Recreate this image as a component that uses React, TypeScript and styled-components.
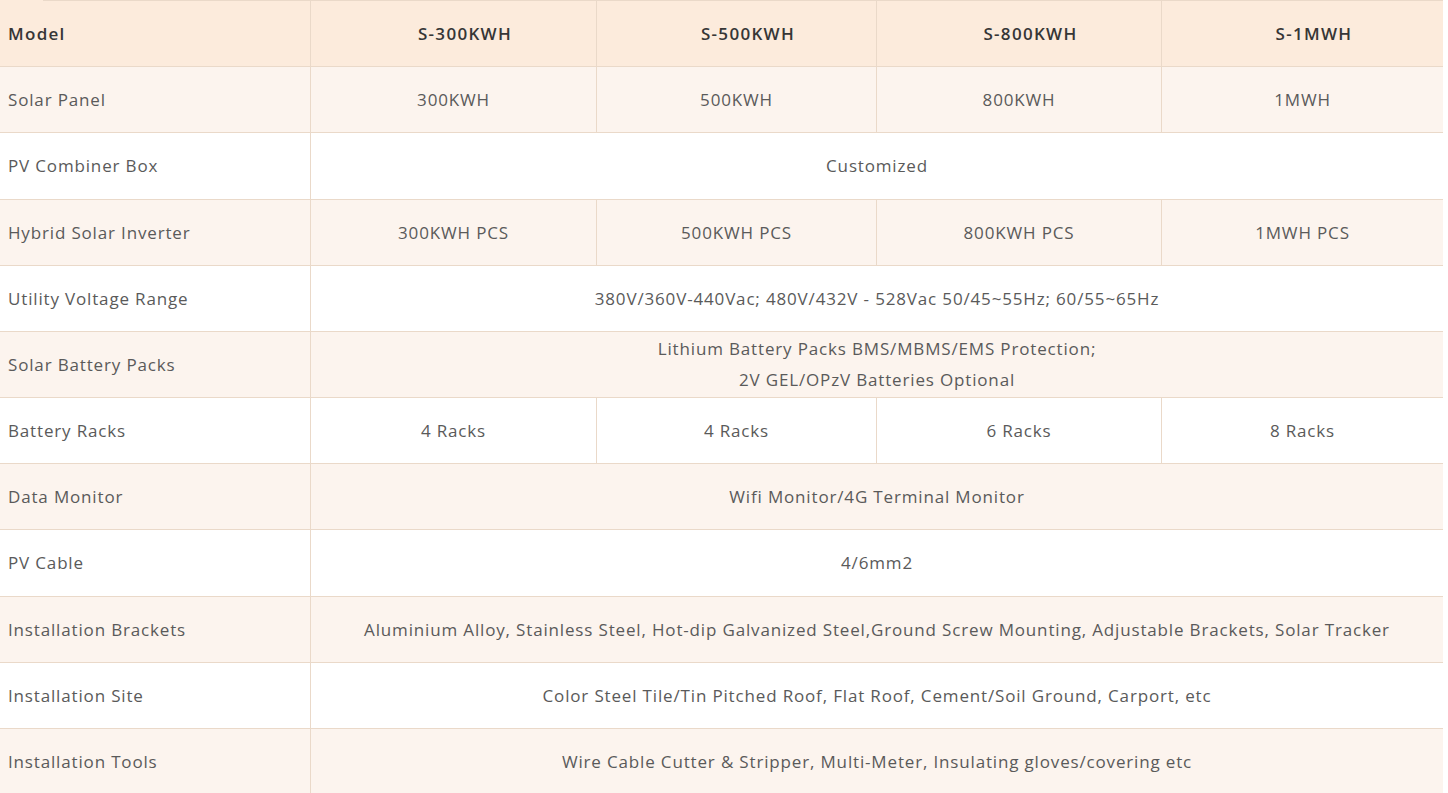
import React from "react";
import styled, { createGlobalStyle } from "styled-components";

const GlobalStyle = createGlobalStyle`
  html, body {
    margin: 0;
    padding: 0;
    background: #ffffff;
  }
  body {
    font-family: "Open Sans", "Liberation Sans", sans-serif;
  }
`;

const Table = styled.div`
  position: relative;
  width: 1443px;
  display: grid;
  grid-template-columns: 311px 286px 280px 285px 281px;
  grid-template-rows: 67.18px;
  grid-auto-rows: 66.18px;
  font-family: "Open Sans", "Liberation Sans", sans-serif;
  font-size: 17px;
  letter-spacing: 0.84px;
  color: #5a5a5a;

  &::before {
    content: "";
    position: absolute;
    top: 0;
    left: 43px;
    right: 0;
    height: 1px;
    background: #ead9c9;
  }
`;

type Tone = "head" | "tint" | "plain";

const bg: Record<Tone, string> = {
  head: "#fcebdc",
  tint: "#fcf4ee",
  plain: "#ffffff",
};

const Cell = styled.div<{ $tone: Tone; $span?: number; $label?: boolean; $last?: boolean }>`
  box-sizing: border-box;
  display: flex;
  flex-direction: column;
  align-items: ${(p) => (p.$label ? "flex-start" : "center")};
  justify-content: center;
  text-align: ${(p) => (p.$label ? "left" : "center")};
  padding: ${(p) => (p.$label ? "0 8px" : p.$tone === "head" ? "0 0 0 23px" : "0 4px")};
  background: ${(p) => bg[p.$tone]};
  border-bottom: 1px solid #ead9c9;
  border-right: ${(p) => (p.$last ? "none" : "1px solid #ead9c9")};
  grid-column: ${(p) => (p.$span ? `span ${p.$span}` : "auto")};
  line-height: 31px;
  white-space: nowrap;
  font-weight: ${(p) => (p.$tone === "head" ? 600 : 400)};
  letter-spacing: ${(p) => (p.$tone === "head" ? "1.3px" : "0.84px")};
  color: ${(p) => (p.$tone === "head" ? "#363636" : "#5a5a5a")};
`;

type Row = { label: string; values: string[][] };

const rows: Row[] = [
  { label: "Solar Panel", values: [["300KWH"], ["500KWH"], ["800KWH"], ["1MWH"]] },
  { label: "PV Combiner Box", values: [["Customized"]] },
  { label: "Hybrid Solar Inverter", values: [["300KWH PCS"], ["500KWH PCS"], ["800KWH PCS"], ["1MWH PCS"]] },
  { label: "Utility Voltage Range", values: [["380V/360V-440Vac; 480V/432V - 528Vac 50/45~55Hz; 60/55~65Hz"]] },
  {
    label: "Solar Battery Packs",
    values: [["Lithium Battery Packs BMS/MBMS/EMS Protection;", "2V GEL/OPzV Batteries Optional"]],
  },
  { label: "Battery Racks", values: [["4 Racks"], ["4 Racks"], ["6 Racks"], ["8 Racks"]] },
  { label: "Data Monitor", values: [["Wifi Monitor/4G Terminal Monitor"]] },
  { label: "PV Cable", values: [["4/6mm2"]] },
  {
    label: "Installation Brackets",
    values: [["Aluminium Alloy, Stainless Steel, Hot-dip Galvanized Steel,Ground Screw Mounting, Adjustable Brackets, Solar Tracker"]],
  },
  { label: "Installation Site", values: [["Color Steel Tile/Tin Pitched Roof, Flat Roof, Cement/Soil Ground, Carport, etc"]] },
  { label: "Installation Tools", values: [["Wire Cable Cutter & Stripper, Multi-Meter, Insulating gloves/covering etc"]] },
];

const models = ["S-300KWH", "S-500KWH", "S-800KWH", "S-1MWH"];

export default function App() {
  return (
    <>
      <GlobalStyle />
      <Table>
        <Cell $tone="head" $label>
          Model
        </Cell>
        {models.map((m, i) => (
          <Cell key={m} $tone="head" $last={i === models.length - 1}>
            {m}
          </Cell>
        ))}
        {rows.map((r, ri) => {
          const tone: Tone = ri % 2 === 0 ? "tint" : "plain";
          const span = r.values.length === 1 ? 4 : undefined;
          return (
            <React.Fragment key={r.label}>
              <Cell $tone={tone} $label>
                {r.label}
              </Cell>
              {r.values.map((lines, vi) => (
                <Cell key={vi} $tone={tone} $span={span} $last={vi === r.values.length - 1}>
                  {lines.map((l) => (
                    <span key={l}>{l}</span>
                  ))}
                </Cell>
              ))}
            </React.Fragment>
          );
        })}
      </Table>
    </>
  );
}
